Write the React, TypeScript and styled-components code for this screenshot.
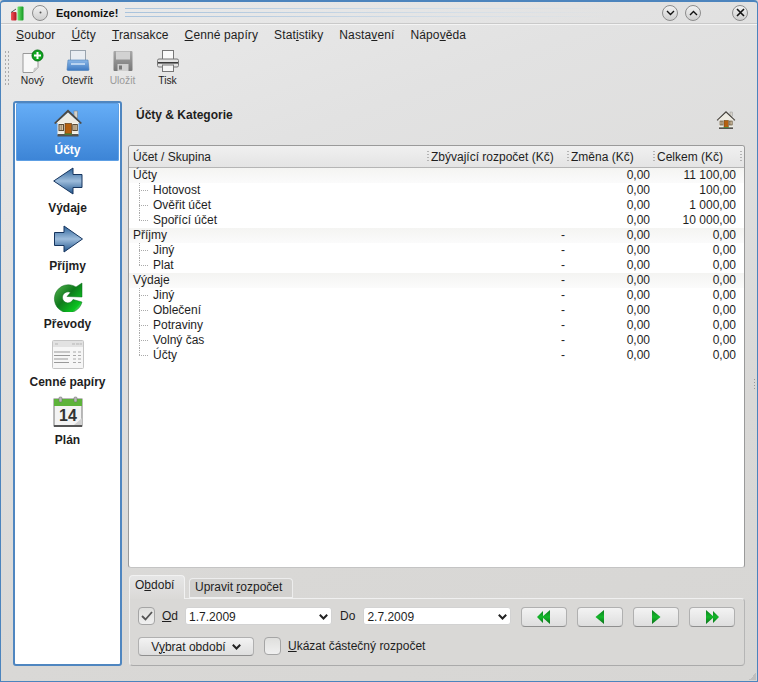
import { ReactNode } from 'react'
import styled, { createGlobalStyle } from 'styled-components'

const GlobalStyle = createGlobalStyle`
  html, body { margin: 0; padding: 0; background: #d8d7d5; }
  body { font-family: "Liberation Sans", Arial, sans-serif; font-size: 12px; color: #1e1e1e; }
  u { text-underline-offset: 1px; }
`

const Window = styled.div`
  width: 758px;
  height: 682px;
  box-sizing: border-box;
  position: relative;
  display: flex;
  flex-direction: column;
  border: 1px solid #4c84bd;
  border-top-width: 2px;
  border-radius: 4px 4px 0 0;
  background: linear-gradient(160deg, #ebebeb 0%, #e2e2e2 25%, #d9d8d6 70%, #d7d6d4 100%);
  overflow: hidden;
`

const TitleBar = styled.div`
  height: 21px;
  flex: none;
  display: flex;
  align-items: center;
  padding: 0 9px 0 9px;
  border-bottom: 1px solid #c9c9c9;
  box-shadow: 0 1px 0 #f4f4f4;
`

const AppTitle = styled.div`
  font-size: 11px;
  font-weight: bold;
  margin: 0 7px 0 8px;
  color: #111;
`

const TitleLines = styled.div`
  flex: 1;
  height: 10px;
  margin-right: 42px;
  background:
    linear-gradient(90deg, #a9c3dc, #d5dfe8 70%, transparent) 0 0 / 100% 1px no-repeat,
    linear-gradient(90deg, #a9c3dc, #d5dfe8 70%, transparent) 0 4px / 100% 1px no-repeat,
    linear-gradient(90deg, #a9c3dc, #d5dfe8 70%, transparent) 0 8px / 100% 1px no-repeat;
`

const RoundButton = styled.div<{ $gap?: number }>`
  width: 16px;
  height: 16px;
  border-radius: 50%;
  box-sizing: border-box;
  border: 1px solid #8c8c8c;
  background: linear-gradient(#f2f2f2, #cfcfcf);
  display: flex;
  align-items: center;
  justify-content: center;
  margin-left: ${({ $gap }) => $gap ?? 0}px;
  flex: none;
`

const MenuBar = styled.div`
  height: 22px;
  flex: none;
  display: flex;
  align-items: center;
  padding: 0 0 0 7px;
`

const MenuItem = styled.div`
  padding: 0 8px;
  font-size: 12px;
  letter-spacing: 0.12px;
`

const ToolBar = styled.div`
  height: 49px;
  flex: none;
  display: flex;
  align-items: flex-start;
  padding: 3px 0 0 3px;
`

const Grip = styled.div`
  width: 6px;
  height: 36px;
  margin-top: 1px;
  background-image: radial-gradient(#aaa 0.7px, transparent 0.8px);
  background-size: 3px 4px;
`

const ToolItem = styled.div<{ $disabled?: boolean }>`
  width: 45px;
  display: flex;
  flex-direction: column;
  align-items: center;
  font-size: 10.3px;
  color: ${({ $disabled }) => ($disabled ? '#9a9a9a' : '#1e1e1e')};
  line-height: 12px;
  gap: 2px;
`

const Content = styled.div`
  flex: 1;
  display: flex;
  padding: 3px 1px 15px 12px;
  min-height: 0;
`

const SideBar = styled.div`
  width: 109px;
  box-sizing: border-box;
  flex: none;
  margin-right: 6px;
  background: #fff;
  border: 2px solid #4f86c0;
  border-radius: 3px;
  display: flex;
  flex-direction: column;
  padding: 0 1px 1px 1px;
`

const SideItem = styled.div<{ $active?: boolean }>`
  height: 58px;
  flex: none;
  box-sizing: border-box;
  display: flex;
  flex-direction: column;
  align-items: center;
  justify-content: flex-end;
  padding-bottom: 4px;
  font-weight: bold;
  font-size: 12px;
  gap: 5px;
  color: ${({ $active }) => ($active ? '#fff' : '#1e1e1e')};
  border-radius: 2px;
  background: ${({ $active }) => ($active ? 'linear-gradient(#66aef7, #3c84d6)' : 'transparent')};
  box-shadow: ${({ $active }) => ($active ? 'inset 0 0 0 1px #5d9fe4' : 'none')};
`

const Main = styled.div`
  width: 617px;
  flex: none;
  display: flex;
  flex-direction: column;
`

const Splitter = styled.div`
  width: 3px;
  height: 12px;
  margin-left: 8px;
  align-self: center;
  background-image: radial-gradient(#999 0.7px, transparent 0.8px);
  background-size: 3px 3px;
`

const ResizeGrip = styled.div`
  position: absolute;
  right: 1px;
  bottom: 1px;
  width: 7px;
  height: 7px;
  background: linear-gradient(135deg, transparent 50%, #b5b5b5 50%);
  opacity: 0.7;
`

const PageHeader = styled.div`
  height: 44px;
  flex: none;
  display: flex;
  justify-content: space-between;
  padding: 0 9px 0 8px;
`

const PageTitle = styled.div`
  font-weight: bold;
  font-size: 12px;
  line-height: 14px;
  padding-top: 7px;
`

const HeaderIcon = styled.div`
  padding-top: 9px;
`

const TreeFrame = styled.div`
  height: 423px;
  flex: none;
  box-sizing: border-box;
  border: 1px solid #9a9a9a;
  border-bottom-color: #c4c4c4;
  border-radius: 3px;
  background: #fff;
  overflow: hidden;
`

const TreeHead = styled.div`
  height: 22px;
  box-sizing: border-box;
  display: flex;
  align-items: center;
  background: linear-gradient(#f0f0f0, #e4e4e4);
  border-bottom: 1px solid #b5b5b5;
  font-size: 12px;
`

const HeadCell = styled.div<{ $w: number; $dots?: boolean }>`
  width: ${({ $w }) => $w}px;
  flex: none;
  box-sizing: border-box;
  padding-left: 4px;
  white-space: nowrap;
  background-image: ${({ $dots }) =>
    $dots ? 'radial-gradient(#b4b4b4 0.6px, transparent 0.7px)' : 'none'};
  background-repeat: repeat-y;
  background-size: 2px 3px;
  background-position: 0 2px;
  height: 12px;
  line-height: 12px;
`

const Row = styled.div<{ $group?: boolean }>`
  height: 15px;
  display: flex;
  align-items: center;
  font-size: 12px;
  line-height: 15px;
  background: ${({ $group }) => ($group ? 'linear-gradient(#f4f4f2, #fbfbfb)' : '#fff')};
`

const NameCell = styled.div`
  width: 298px;
  flex: none;
  display: flex;
  height: 15px;
  padding-left: 4px;
  box-sizing: border-box;
`

const ValueCell = styled.div<{ $w: number }>`
  width: ${({ $w }) => $w}px;
  flex: none;
  box-sizing: border-box;
  padding-right: 4px;
  text-align: right;
  white-space: nowrap;
`

const Branch = styled.div<{ $last?: boolean }>`
  width: 11px;
  margin: 0 3px 0 6px;
  height: ${({ $last }) => ($last ? '8px' : '15px')};
  flex: none;
  background:
    repeating-linear-gradient(180deg, #aaa 0 1px, transparent 1px 2px) 0 0 / 1px 100% no-repeat,
    repeating-linear-gradient(90deg, #aaa 0 1px, transparent 1px 2px) 0 7px / 9px 1px no-repeat;
`

const TabStrip = styled.div`
  height: 30px;
  flex: none;
  display: flex;
  align-items: flex-end;
  padding-left: 1px;
  gap: 4px;
`

const Tab = styled.div<{ $active?: boolean; $w: number }>`
  width: ${({ $w }) => $w}px;
  box-sizing: border-box;
  height: ${({ $active }) => ($active ? '24px' : '20px')};
  margin-bottom: ${({ $active }) => ($active ? '-1px' : '0')};
  position: relative;
  z-index: ${({ $active }) => ($active ? 1 : 0)};
  padding: ${({ $active }) => ($active ? '2px 0 0 5px' : '1px 0 0 5px')};
  font-size: 12px;
  border: 1px solid ${({ $active }) => ($active ? '#f2f2f2' : '#ededed')};
  border-bottom: ${({ $active }) => ($active ? 'none' : '1px solid #f0f0f0')};
  border-radius: 4px 4px 0 0;
  background: ${({ $active }) => ($active ? 'linear-gradient(#e6e6e6, #dad9d7)' : '#d2d1cf')};
`

const TabPanel = styled.div`
  flex: 1;
  box-sizing: border-box;
  margin: 0 0 1px 1px;
  border: 1px solid #f0f0f0;
  border-right-color: #b5b5b5;
  border-bottom-color: #aaa;
  border-radius: 0 4px 4px 4px;
  background: #d9d8d6;
  padding: 8px 8px;
  display: flex;
  flex-direction: column;
  gap: 10px;
`

const ControlRow = styled.div`
  display: flex;
  align-items: flex-start;
  height: 20px;
`

const CheckBox = styled.div<{ $ml?: number }>`
  width: 17px;
  height: 18px;
  box-sizing: border-box;
  flex: none;
  margin-left: ${({ $ml }) => $ml ?? 0}px;
  border: 1px solid #a5a5a5;
  border-radius: 4px;
  background: linear-gradient(#dfdfdd, #f0f0f0);
  display: flex;
  align-items: center;
  justify-content: center;
`

const FieldLabel = styled.div<{ $ml: number; $mr: number }>`
  margin: 0 ${({ $mr }) => $mr}px 0 ${({ $ml }) => $ml}px;
  line-height: 18px;
  font-size: 12px;
  white-space: nowrap;
`

const DateSelect = styled.div<{ $w: number }>`
  width: ${({ $w }) => $w}px;
  height: 18px;
  box-sizing: border-box;
  flex: none;
  background: #fff;
  border: 1px solid #d2d2d2;
  border-radius: 3px;
  display: flex;
  align-items: center;
  justify-content: space-between;
  padding: 1px 3px 0 3px;
  font-size: 12px;
`

const NavGroup = styled.div`
  display: flex;
  gap: 10px;
  margin-left: 10px;
`

const PushButton = styled.div<{ $w: number; $h?: number }>`
  width: ${({ $w }) => $w}px;
  height: ${({ $h }) => $h ?? 20}px;
  box-sizing: border-box;
  flex: none;
  border: 1px solid #b0b0b0;
  border-bottom-color: #8f8f8f;
  border-radius: 4px;
  background: linear-gradient(#f3f3f3, #dedede);
  display: flex;
  align-items: center;
  justify-content: center;
  gap: 6px;
  font-size: 12px;
`

const Chevron = () => (
  <svg width="9" height="6" viewBox="0 0 9 6">
    <path d="M0.8 0.8l3.7 3.7 3.7-3.7" fill="none" stroke="#222" strokeWidth="2" />
  </svg>
)

const Gradients = () => (
  <svg width="0" height="0" style={{ position: 'absolute' }}>
    <defs>
      <linearGradient id="blueArrow" x1="0" y1="0" x2="0" y2="1">
        <stop offset="0" stopColor="#2c639a" />
        <stop offset="0.5" stopColor="#9dbcdb" />
        <stop offset="1" stopColor="#1f548c" />
      </linearGradient>
      <linearGradient id="greenBall" x1="0" y1="0" x2="1" y2="1">
        <stop offset="0" stopColor="#5db854" />
        <stop offset="0.45" stopColor="#0f7a1c" />
        <stop offset="0.8" stopColor="#0bc421" />
        <stop offset="1" stopColor="#d8f5da" />
      </linearGradient>
      <linearGradient id="greenTri" x1="0" y1="0" x2="0" y2="1">
        <stop offset="0" stopColor="#0d7c1f" />
        <stop offset="0.5" stopColor="#14b82a" />
        <stop offset="1" stopColor="#0a6d1a" />
      </linearGradient>
      <linearGradient id="trayBlue" x1="0" y1="0" x2="0" y2="1">
        <stop offset="0" stopColor="#8cb8e8" />
        <stop offset="1" stopColor="#3c79c2" />
      </linearGradient>
      <linearGradient id="floppy" x1="0" y1="0" x2="0" y2="1">
        <stop offset="0" stopColor="#a8a8a8" />
        <stop offset="1" stopColor="#777" />
      </linearGradient>
      <linearGradient id="appGreen" x1="0" y1="0" x2="1" y2="0">
        <stop offset="0" stopColor="#6fe06f" />
        <stop offset="1" stopColor="#149a22" />
      </linearGradient>
      <linearGradient id="appRed" x1="0" y1="0" x2="1" y2="0">
        <stop offset="0" stopColor="#f0555a" />
        <stop offset="1" stopColor="#b0121c" />
      </linearGradient>
    </defs>
  </svg>
)

const HouseIcon = ({ size = 30 }: { size?: number }) => (
  <svg width={size} height={size} viewBox="0 0 30 30">
    <rect x="21" y="3" width="3.5" height="7" fill="#d5d2ca" stroke="#777" strokeWidth="0.5" />
    <rect x="4.5" y="13" width="21" height="14" fill="#f6f4ec" />
    <path d="M1 15L15 1.5 29 15l-1.5 1L15 4.5 2.5 16z" fill="#4d4a44" />
    <path d="M3.5 15L15 4.5 26.5 15z" fill="#eeebe2" />
    <path d="M5 18h20M5 21h20M5 24h20" stroke="#dcd8cc" strokeWidth="0.6" />
    <rect x="12" y="15.5" width="6.5" height="10.5" fill="#b5600f" stroke="#5e3a12" strokeWidth="0.7" />
    <rect x="6" y="16.5" width="4.5" height="6" fill="#d8c6a8" stroke="#5b4b36" />
    <rect x="19.8" y="16.5" width="4.5" height="6" fill="#d8c6a8" stroke="#5b4b36" />
    <path d="M8.2 16.5v6M22 16.5v6" stroke="#5b4b36" strokeWidth="0.6" />
    <rect x="4.5" y="26" width="21" height="2.5" fill="#55534f" />
    <rect x="11.5" y="25.6" width="7.5" height="1" fill="#3d9a35" />
  </svg>
)

const LeftArrowIcon = () => (
  <svg width="30" height="30" viewBox="0 0 30 30">
    <path d="M0.7 15L20 2v6.5h9v13h-9V28z" fill="url(#blueArrow)" stroke="#16355f" strokeWidth="1" />
  </svg>
)

const RightArrowIcon = () => (
  <svg width="30" height="30" viewBox="0 0 30 30">
    <path d="M29.5 15L11 2v6.5H1.5v13H11V28z" fill="url(#blueArrow)" stroke="#16355f" strokeWidth="1" />
  </svg>
)

const RefreshIcon = () => (
  <svg width="30" height="30" viewBox="0 0 30 30">
    <path
      d="M23 5A14 14 0 1 0 29 20L20 17.5A5.5 5.5 0 1 1 17.5 10.5L14 14.5L29 15L29 1z"
      fill="url(#greenBall)"
      stroke="#0b6a1b"
      strokeWidth="0.5"
    />
  </svg>
)

const SheetIcon = () => (
  <svg width="32" height="30" viewBox="0 0 32 30">
    <rect x="0.5" y="0.5" width="31" height="28" rx="1" fill="#f6f6f6" stroke="#c4c4c4" />
    <rect x="1" y="1" width="30" height="6" fill="#e2e2e2" />
    <path d="M2 12h16M2 15.5h16M2 19h14M2 22.5h15" stroke="#999" />
    <path d="M21 12h3M26 12h3M21 15.5h3M26 15.5h3M21 19h3M26 19h3M21 22.5h3M26 22.5h3" stroke="#aaa" />
    <path d="M20 4h3M24 4h3M27.5 4h2.5M3 4h3" stroke="#b5b5b5" />
  </svg>
)

const CalendarIcon = () => (
  <svg width="30" height="32" viewBox="0 0 30 32">
    <rect x="1" y="3" width="28" height="27" fill="#f3f3f3" stroke="#777" />
    <rect x="1" y="3" width="28" height="7" fill="#5db33a" />
    <path d="M29 22v7h-8z" fill="#d0d0d0" />
    <rect x="6" y="1" width="3" height="5" rx="1" fill="#b9b9b9" stroke="#666" strokeWidth="0.5" />
    <rect x="21" y="1" width="3" height="5" rx="1" fill="#b9b9b9" stroke="#666" strokeWidth="0.5" />
    <rect x="1" y="29" width="28" height="2" fill="#555" />
    <text x="15" y="25" fontFamily="Liberation Sans" fontWeight="bold" fontSize="16" fill="#333" textAnchor="middle">
      14
    </text>
  </svg>
)

const NewIcon = () => (
  <svg width="24" height="24" viewBox="0 0 24 24">
    <path d="M2 4.5h15v14l-5 5H2z" fill="#f8f8f8" stroke="#999" />
    <path d="M12 23l1-4 4-1z" fill="#ccc" />
    <circle cx="16.5" cy="6.5" r="5.5" fill="#0da51e" stroke="#067013" />
    <path d="M16.5 3v7M13 6.5h7" stroke="#fff" strokeWidth="2" />
  </svg>
)

const OpenIcon = () => (
  <svg width="24" height="24" viewBox="0 0 24 24">
    <rect x="4.5" y="1.5" width="15" height="12" fill="#e9edf2" stroke="#9aa4ae" />
    <path d="M2 11h20l1 9.5a1 1 0 0 1-1 1H2a1 1 0 0 1-1-1z" fill="url(#trayBlue)" stroke="#4b7fb8" strokeWidth="0.6" />
    <rect x="5" y="14" width="14" height="2" fill="#b8d3f0" />
  </svg>
)

const SaveIcon = () => (
  <svg width="24" height="24" viewBox="0 0 24 24">
    <rect x="2.5" y="2" width="19" height="20" rx="1" fill="url(#floppy)" />
    <rect x="5" y="2.5" width="14" height="8" fill="#d2d2d2" />
    <rect x="6.5" y="15" width="11" height="7" fill="#cfcfcf" />
    <rect x="8" y="16.5" width="3" height="4" fill="#777" />
  </svg>
)

const PrintIcon = () => (
  <svg width="24" height="24" viewBox="0 0 24 24">
    <rect x="6.5" y="1.5" width="11" height="9" fill="#fafafa" stroke="#777" />
    <rect x="1.5" y="10" width="21" height="8" rx="1.5" fill="#e2e2e2" stroke="#777" />
    <rect x="2" y="13" width="20" height="1.6" fill="#3a3a3a" />
    <rect x="6.5" y="16" width="11" height="6.5" fill="#f5f5f5" stroke="#777" />
  </svg>
)

const AppIcon = () => (
  <svg width="15" height="16" viewBox="0 0 15 16">
    <rect x="1" y="7" width="5.5" height="8.5" rx="1" fill="url(#appRed)" />
    <path d="M1 7.5l5-3.5" stroke="#555" strokeWidth="1" />
    <rect x="7.5" y="1.5" width="6" height="14" rx="1" fill="url(#appGreen)" />
  </svg>
)

const TriangleNav = ({ kind }: { kind: 'first' | 'prev' | 'next' | 'last' }) => {
  const paths = {
    first: 'M0 7l6-6v12zM5 7l8-7v14z',
    prev: 'M2.5 7L11 0v14z',
    next: 'M11.5 7L3 0v14z',
    last: 'M14 7L8 1v12zM9 7L1 0v14z',
  }
  return (
    <svg width="14" height="14" viewBox="0 0 14 14">
      <path d={paths[kind]} fill="url(#greenTri)" />
    </svg>
  )
}

type Item = { name: ReactNode; budget?: string; change: string; total: string; group?: boolean; last?: boolean }

const rows: Item[] = [
  { name: 'Účty', change: '0,00', total: '11 100,00', group: true },
  { name: 'Hotovost', change: '0,00', total: '100,00' },
  { name: 'Ověřit účet', change: '0,00', total: '1 000,00' },
  { name: 'Spořící účet', change: '0,00', total: '10 000,00', last: true },
  { name: 'Příjmy', budget: '-', change: '0,00', total: '0,00', group: true },
  { name: 'Jiný', budget: '-', change: '0,00', total: '0,00' },
  { name: 'Plat', budget: '-', change: '0,00', total: '0,00', last: true },
  { name: 'Výdaje', budget: '-', change: '0,00', total: '0,00', group: true },
  { name: 'Jiný', budget: '-', change: '0,00', total: '0,00' },
  { name: 'Oblečení', budget: '-', change: '0,00', total: '0,00' },
  { name: 'Potraviny', budget: '-', change: '0,00', total: '0,00' },
  { name: 'Volný čas', budget: '-', change: '0,00', total: '0,00' },
  { name: 'Účty', budget: '-', change: '0,00', total: '0,00', last: true },
]

const sideItems = [
  { label: 'Účty', icon: <HouseIcon /> },
  { label: 'Výdaje', icon: <LeftArrowIcon /> },
  { label: 'Příjmy', icon: <RightArrowIcon /> },
  { label: 'Převody', icon: <RefreshIcon /> },
  { label: 'Cenné papíry', icon: <SheetIcon /> },
  { label: 'Plán', icon: <CalendarIcon /> },
]

export default function App() {
  return (
    <>
      <GlobalStyle />
      <Gradients />
      <Window>
        <TitleBar>
          <AppIcon />
          <RoundButton $gap={7}>
            <svg width="3" height="3"><circle cx="1.5" cy="1.5" r="1" fill="#555" /></svg>
          </RoundButton>
          <AppTitle>Eqonomize!</AppTitle>
          <TitleLines />
          <RoundButton>
            <svg width="9" height="6" viewBox="0 0 9 6"><path d="M1 1l3.5 3.5L8 1" fill="none" stroke="#111" strokeWidth="1.4" /></svg>
          </RoundButton>
          <RoundButton $gap={7}>
            <svg width="9" height="6" viewBox="0 0 9 6"><path d="M1 5l3.5-3.5L8 5" fill="none" stroke="#111" strokeWidth="1.4" /></svg>
          </RoundButton>
          <RoundButton $gap={31}>
            <svg width="9" height="9" viewBox="0 0 9 9"><path d="M1 1l7 7M8 1L1 8" fill="none" stroke="#111" strokeWidth="1.6" /></svg>
          </RoundButton>
        </TitleBar>
        <MenuBar>
          <MenuItem><u>S</u>oubor</MenuItem>
          <MenuItem><u>Ú</u>čty</MenuItem>
          <MenuItem><u>T</u>ransakce</MenuItem>
          <MenuItem><u>C</u>enné papíry</MenuItem>
          <MenuItem>Stat<u>i</u>stiky</MenuItem>
          <MenuItem>Nasta<u>v</u>ení</MenuItem>
          <MenuItem>Nápo<u>v</u>ěda</MenuItem>
        </MenuBar>
        <ToolBar>
          <Grip />
          <ToolItem><NewIcon />Nový</ToolItem>
          <ToolItem><OpenIcon />Otevřít</ToolItem>
          <ToolItem $disabled><SaveIcon />Uložit</ToolItem>
          <ToolItem><PrintIcon />Tisk</ToolItem>
        </ToolBar>
        <Content>
          <SideBar>
            {sideItems.map((s, i) => (
              <SideItem key={s.label} $active={i === 0}>
                {s.icon}
                {s.label}
              </SideItem>
            ))}
          </SideBar>
          <Main>
            <PageHeader>
              <PageTitle>Účty &amp; Kategorie</PageTitle>
              <HeaderIcon><HouseIcon size={20} /></HeaderIcon>
            </PageHeader>
            <TreeFrame>
              <TreeHead>
                <HeadCell $w={298}>Účet / Skupina</HeadCell>
                <HeadCell $w={140} $dots>Zbývající rozpočet (Kč)</HeadCell>
                <HeadCell $w={86} $dots>Změna (Kč)</HeadCell>
                <HeadCell $w={87} $dots>Celkem (Kč)</HeadCell>
                <HeadCell $w={4} $dots />
              </TreeHead>
              {rows.map((r, i) => (
                <Row key={i} $group={r.group}>
                  <NameCell>
                    {!r.group && <Branch $last={r.last} />}
                    {r.name}
                  </NameCell>
                  <ValueCell $w={142}>{r.budget}</ValueCell>
                  <ValueCell $w={85}>{r.change}</ValueCell>
                  <ValueCell $w={86}>{r.total}</ValueCell>
                </Row>
              ))}
            </TreeFrame>
            <TabStrip>
              <Tab $active $w={56}>O<u>b</u>dobí</Tab>
              <Tab $w={104}>Upravit <u>r</u>ozpočet</Tab>
            </TabStrip>
            <TabPanel>
              <ControlRow>
                <CheckBox>
                  <svg width="12" height="10" viewBox="0 0 12 10">
                    <path d="M1 5l3.5 3.5L11 1" fill="none" stroke="#555" strokeWidth="1.8" />
                  </svg>
                </CheckBox>
                <FieldLabel $ml={7} $mr={7}><u>O</u>d</FieldLabel>
                <DateSelect $w={147}>1.7.2009<Chevron /></DateSelect>
                <FieldLabel $ml={8} $mr={8}>Do</FieldLabel>
                <DateSelect $w={148}>2.7.2009<Chevron /></DateSelect>
                <NavGroup>
                  <PushButton $w={46}><TriangleNav kind="first" /></PushButton>
                  <PushButton $w={46}><TriangleNav kind="prev" /></PushButton>
                  <PushButton $w={46}><TriangleNav kind="next" /></PushButton>
                  <PushButton $w={46}><TriangleNav kind="last" /></PushButton>
                </NavGroup>
              </ControlRow>
              <ControlRow>
                <PushButton $w={116} $h={19}>
                  <span>V<u>y</u>brat období</span>
                  <Chevron />
                </PushButton>
                <CheckBox $ml={10} />
                <FieldLabel $ml={7} $mr={0}><u>U</u>kázat částečný rozpočet</FieldLabel>
              </ControlRow>
            </TabPanel>
          </Main>
          <Splitter />
        </Content>
        <ResizeGrip />
      </Window>
    </>
  )
}
